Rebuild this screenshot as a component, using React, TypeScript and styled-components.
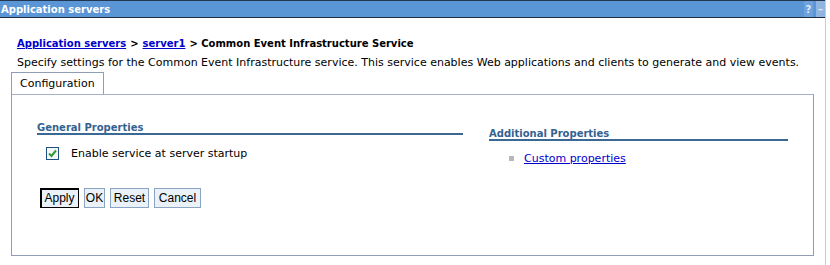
import React, { useState } from "react";
import styled, { createGlobalStyle } from "styled-components";

const GlobalStyle = createGlobalStyle`
  body {
    margin: 0;
    background: #ffffff;
    font-family: "DejaVu Sans", Verdana, sans-serif;
    font-size: 11px;
    color: #000000;
  }
`;

const Frame = styled.div`
  width: 826px;
  height: 265px;
  border-right: 1px solid #c8ccd4;
  box-sizing: border-box;
`;

const TitleBar = styled.div`
  height: 18px;
  box-sizing: border-box;
  background: #5a95d5;
  border-top: 1px solid #22364f;
  border-bottom: 1px solid #1f2d3d;
  display: flex;
  align-items: center;
  justify-content: space-between;
  padding-left: 1px;
  color: #ffffff;
  font-weight: bold;
  font-size: 10px;
`;

const TitleIcons = styled.div`
  display: flex;
  align-self: stretch;
  gap: 3px;
`;

const TitleIcon = styled.span<{ dark?: boolean }>`
  width: 9px;
  display: flex;
  align-items: center;
  justify-content: center;
  background: ${(p) => (p.dark ? "#8fb5e0" : "#6ea2dc")};
  color: #dfe9f6;
  font-size: 10px;
`;

const Content = styled.div`
  padding: 16px 12px 0 11px;
`;

const Breadcrumb = styled.div`
  padding-left: 6px;
  font-weight: bold;
  font-size: 10px;
  height: 19px;
  display: flex;
  align-items: center;
  gap: 4px;
`;

const Link = styled.a`
  color: #0000cc;
  text-decoration: underline;
  cursor: pointer;
`;

const Description = styled.div`
  padding-left: 6px;
  height: 19px;
  display: flex;
  align-items: center;
  white-space: nowrap;
`;

const Tabs = styled.div`
  display: flex;
`;

const Tab = styled.div`
  width: 93px;
  height: 22px;
  box-sizing: border-box;
  border: 1px solid #8f9db6;
  border-bottom: none;
  display: flex;
  align-items: center;
  padding-left: 8px;
`;

const Panel = styled.div`
  width: 803px;
  height: 162px;
  box-sizing: border-box;
  border: 1px solid #8f9db6;
  border-top-color: #a4b0c4;
  padding: 24px 25px 0 25px;
`;

const Columns = styled.div`
  display: grid;
  grid-template-columns: 426px 299px;
  column-gap: 26px;
`;

const Column = styled.div<{ offset?: number }>`
  padding-top: ${(p) => p.offset ?? 0}px;
`;

const Heading = styled.div`
  font-weight: bold;
  font-size: 10px;
  color: #34628f;
  height: 14px;
  border-bottom: 2px solid #3b6994;
  display: flex;
  align-items: flex-end;
`;

const CheckRow = styled.label`
  display: flex;
  align-items: center;
  gap: 12px;
  margin: 12px 0 0 9px;
`;

const Box = styled.span`
  width: 11px;
  height: 11px;
  border: 1px solid #1c5180;
  background: #f4f6f8;
  display: flex;
  align-items: center;
  justify-content: center;
`;

const BulletRow = styled.div`
  display: flex;
  align-items: center;
  gap: 10px;
  margin: 11px 0 0 20px;
`;

const Bullet = styled.span`
  width: 5px;
  height: 5px;
  background: #b8b8b8;
`;

const Buttons = styled.div`
  display: flex;
  gap: 5px;
  margin: 28px 0 0 3px;
`;

const Button = styled.button<{ focused?: boolean; w: number }>`
  font-family: "Liberation Sans", Arial, sans-serif;
  font-size: 12px;
  width: ${(p) => p.w}px;
  height: 20px;
  padding: 0;
  background: #eaf1f8;
  color: #000000;
  border: 1px solid ${(p) => (p.focused ? "#000000" : "#8aa4c2")};
  box-shadow: ${(p) => (p.focused ? "inset 1px 1px 0 #000000" : "none")};
  cursor: pointer;
`;

const Check = () => (
  <svg width="11" height="11" viewBox="0 0 11 11">
    <path d="M2 5.5 L4.5 8 L9 2.5" stroke="#2e9b34" strokeWidth="2" fill="none" />
  </svg>
);

export default function App() {
  const [enabled, setEnabled] = useState(true);
  return (
    <>
      <GlobalStyle />
      <Frame>
        <TitleBar>
          <span>Application servers</span>
          <TitleIcons>
            <TitleIcon>?</TitleIcon>
            <TitleIcon dark>–</TitleIcon>
          </TitleIcons>
        </TitleBar>
        <Content>
          <Breadcrumb>
            <Link>Application servers</Link>
            <span>&gt;</span>
            <Link>server1</Link>
            <span>&gt; Common Event Infrastructure Service</span>
          </Breadcrumb>
          <Description>
            Specify settings for the Common Event Infrastructure service. This service enables Web
            applications and clients to generate and view events.
          </Description>
          <Tabs>
            <Tab>Configuration</Tab>
          </Tabs>
          <Panel>
            <Columns>
              <Column>
                <Heading>General Properties</Heading>
                <CheckRow onClick={() => setEnabled(!enabled)}>
                  <Box>{enabled && <Check />}</Box>
                  <span>Enable service at server startup</span>
                </CheckRow>
                <Buttons>
                  <Button focused w={39}>Apply</Button>
                  <Button w={21}>OK</Button>
                  <Button w={39}>Reset</Button>
                  <Button w={47}>Cancel</Button>
                </Buttons>
              </Column>
              <Column offset={6}>
                <Heading>Additional Properties</Heading>
                <BulletRow>
                  <Bullet />
                  <Link>Custom properties</Link>
                </BulletRow>
              </Column>
            </Columns>
          </Panel>
        </Content>
      </Frame>
    </>
  );
}
